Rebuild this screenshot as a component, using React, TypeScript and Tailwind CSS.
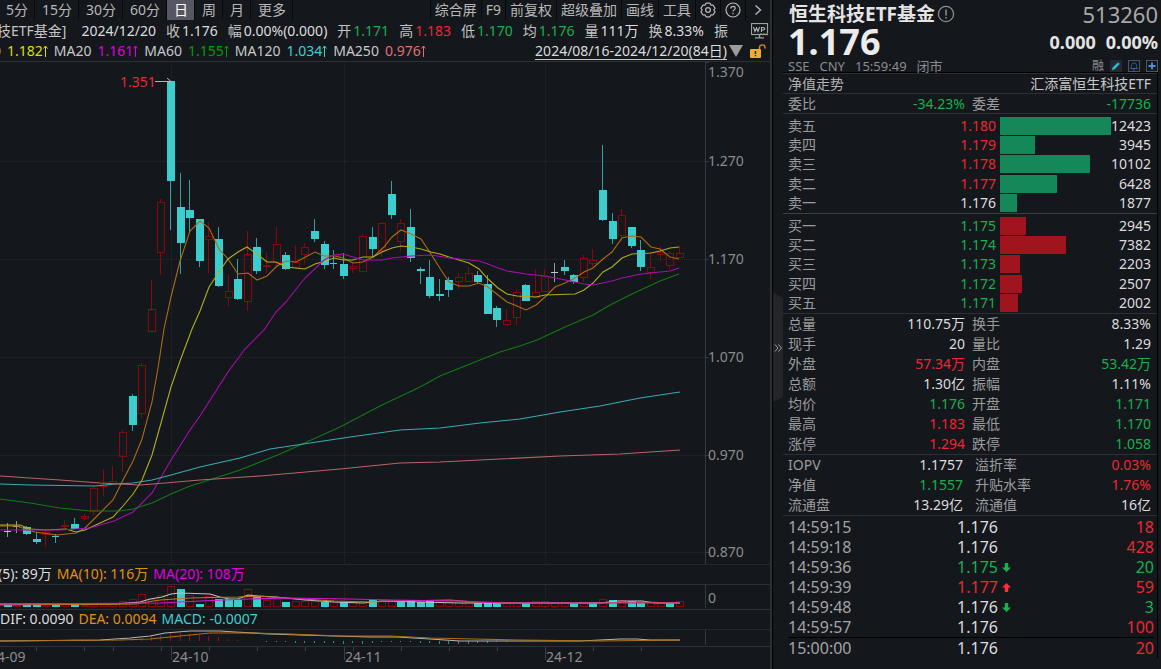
import type { ReactNode } from 'react';

type Tone = 'w' | 'r' | 'g' | 'l';
const tones: Record<Tone, string> = {
  w: 'text-[#dcdcdc]',
  r: 'text-[#ee2830]',
  g: 'text-[#1ab04c]',
  l: 'text-[#9c9c9c]',
};

// kind, high, body top, body bottom, low; r = rising, c = falling, w = unchanged
type Candle = ['r' | 'c' | 'w', number, number, number, number];
const FIRST = -17;
const candles: Candle[] = [
  ['w', 523, 531, 531, 537], ['w', 521, 526, 526, 533], ['c', 526, 527, 534, 535], ['c', 532, 539, 542, 544],
  ['r', 530, 532, 534, 547], ['c', 534, 536, 536, 543], ['r', 520, 525, 526, 528], ['c', 518, 524, 529, 529],
  ['r', 514, 516, 518, 520], ['r', 485, 488, 510, 516], ['r', 469, 485, 486, 496], ['r', 466, 481, 484, 484],
  ['r', 430, 432, 456, 472], ['c', 394, 396, 425, 431], ['r', 363, 365, 413, 418], ['r', 280, 309, 331, 331],
  ['r', 199, 202, 252, 275], ['c', 81, 81, 181, 230], ['c', 173, 207, 243, 274], ['c', 180, 210, 218, 232],
  ['c', 219, 219, 261, 267], ['r', 222, 236, 239, 273], ['c', 227, 239, 286, 287], ['r', 275, 291, 297, 306],
  ['c', 259, 279, 299, 300], ['r', 231, 254, 301, 311], ['c', 238, 247, 271, 274], ['r', 252, 265, 266, 273],
  ['r', 227, 244, 262, 267], ['c', 252, 255, 269, 270], ['r', 245, 262, 267, 268], ['r', 243, 247, 254, 263],
  ['c', 219, 231, 239, 242], ['c', 241, 244, 265, 269], ['c', 250, 263, 263, 269], ['c', 253, 264, 276, 279],
  ['r', 263, 266, 268, 273], ['r', 234, 236, 271, 271], ['c', 227, 237, 249, 258], ['r', 222, 223, 250, 257],
  ['c', 181, 194, 215, 219], ['r', 219, 223, 241, 251], ['c', 209, 227, 258, 262], ['c', 267, 269, 271, 284],
  ['c', 260, 277, 296, 298], ['c', 279, 294, 296, 301], ['c', 277, 280, 290, 297], ['r', 273, 277, 281, 289],
  ['r', 267, 273, 281, 282], ['c', 271, 275, 282, 284], ['c', 275, 284, 314, 314], ['c', 306, 308, 320, 327],
  ['r', 309, 320, 324, 325], ['r', 290, 292, 317, 325], ['c', 284, 285, 301, 301], ['r', 269, 292, 297, 298],
  ['r', 269, 276, 291, 291], ['w', 263, 272, 272, 282], ['c', 260, 267, 271, 275], ['c', 274, 275, 282, 284],
  ['r', 255, 258, 277, 282], ['r', 249, 260, 263, 267], ['c', 145, 190, 220, 221], ['c', 213, 221, 239, 244],
  ['r', 209, 215, 235, 241], ['c', 227, 227, 246, 248], ['c', 240, 250, 267, 271], ['r', 251, 267, 272, 279],
  ['r', 246, 252, 254, 261], ['r', 252, 253, 265, 269], ['r', 246, 253, 257, 258],
];

const volumes: [('r' | 'c'), number][] = [
  ['c', 2], ['r', 2], ['c', 2], ['c', 2], ['r', 2], ['c', 2], ['r', 2], ['c', 2], ['r', 1], ['r', 2], ['r', 2], ['r', 3],
  ['r', 5], ['r', 7], ['r', 12], ['r', 7], ['r', 11], ['r', 20], ['c', 18], ['r', 11], ['c', 3], ['r', 10], ['c', 8],
  ['c', 8], ['c', 7], ['r', 17], ['c', 10], ['r', 6], ['r', 7], ['c', 5], ['r', 5], ['r', 5], ['r', 5], ['c', 5],
  ['r', 5], ['c', 5], ['r', 4], ['r', 5], ['c', 7], ['r', 5], ['r', 5], ['c', 6], ['c', 7], ['c', 5], ['c', 6],
  ['r', 5], ['r', 5], ['r', 5], ['r', 4], ['c', 4], ['c', 4], ['c', 4], ['r', 3], ['r', 3], ['c', 4], ['r', 5],
  ['r', 5], ['r', 4], ['r', 4], ['c', 4], ['r', 4], ['c', 5], ['r', 7], ['c', 7], ['r', 6], ['c', 6], ['c', 4],
  ['r', 4], ['r', 3], ['c', 4], ['r', 5],
];

const macdBars: [number, number][] = [
  [-7, -1], [-6, -1], [-5, -2], [-4, -2], [-3, -3], [-2, -5], [-1, -6], [0, -8], [1, -8], [2, -7], [3, -6], [4, -5],
  [5, -4], [6, -2], [7, -1], [10, 1], [11, 1], [12, 1], [13, 2], [14, 2], [15, 2], [16, 2], [17, 2], [18, 3], [19, 2],
  [20, 3], [21, 2], [22, 1], [23, 1], [24, 1], [25, 1], [26, 2], [27, 2], [28, 3], [29, 3], [30, 3], [31, 3], [32, 2],
  [33, 2], [34, 1], [35, 1],
];

const averages = [
  { c: '#ad6c12', p: '0,526 17,526 25,529 35,532 57,535 76,533 85,528 100,513 113,500 122,482 133,461 142,439 152,402 158,368 164,329 171,297 180,261 190,231 200,221 209,228 219,249 228,259 238,274 248,273 257,280 267,276 277,266 286,261 296,262 315,252 324,256 335,256 343,258 353,263 363,262 373,257 384,247 392,237 401,230 411,234 421,239 431,254 441,270 449,282 459,286 469,286 479,283 488,287 498,295 507,302 517,306 526,310 536,305 545,297 555,287 565,283 575,278 584,272 593,268 603,259 612,252 622,238 631,236 641,237 651,247 660,249 670,257 679,259' },
  { c: '#b0ae1c', p: '0,525 20,525 30,529 45,530 66,529 76,532 85,530 113,517 123,506 133,494 142,480 152,455 161,423 171,387 180,361 192,329 200,311 209,287 219,272 228,259 238,252 247,247 257,254 267,262 276,262 286,267 305,269 315,264 325,261 334,258 343,260 353,260 363,257 373,257 382,252 392,248 401,246 411,247 421,249 431,252 440,254 449,257 459,260 469,263 479,269 488,279 498,288 507,294 517,296 536,297 545,295 575,294 584,290 593,283 603,272 612,267 622,258 632,254 651,253 660,251 670,248 679,247' },
  { c: '#a80fae', p: '0,530 60,530 90,528 114,521 133,512 152,493 171,460 190,430 200,416 228,372 245,349 264,330 276,312 286,302 305,278 324,260 334,255 343,254 353,257 363,260 382,260 392,258 411,256 431,255 450,258 469,260 479,261 488,264 498,268 507,271 526,274 545,276 555,278 570,281 584,284 593,285 612,281 622,278 641,274 660,272 670,271 679,268' },
  { c: '#127a14', p: '0,499 30,503 60,508 90,511 120,511 133,509 152,503 171,494 190,486 200,483 240,470 280,454 300,445 340,427 380,406 420,387 440,376 470,364 500,352 520,346 537,340 565,327 593,315 612,304 632,294 660,281 679,274' },
  { c: '#36adad', p: '0,484 30,485 95,486 115,484 133,483 152,480 171,475 200,467 240,458 270,449 310,443 350,437 400,430 440,428 480,423 520,419 560,412 600,406 640,398 680,392' },
  { c: '#bb6464', p: '0,476 60,480 100,483 140,485 165,483 200,480 260,476 340,469 400,463 440,462 500,459 560,456 620,454 680,450' },
];

const candleX = (n: number) => Math.round(170 + 9.6 * n);
const months = [171, 344, 545];

function PriceChart() {
  return (
    <svg viewBox="0 62 770 502" className="block h-auto w-full" role="img" aria-label="日K线">
      <g stroke="#25282d" strokeDasharray="1 1">
        {[161, 259, 357, 455, 552].map((y) => <line key={y} x1="0" x2="705" y1={y + 0.5} y2={y + 0.5} />)}
        {months.map((x) => <line key={x} x1={x + 0.5} x2={x + 0.5} y1="62" y2="564" />)}
      </g>
      <line x1="705.5" x2="705.5" y1="62" y2="564" stroke="#35383d" />
      {[62, 161, 259, 357, 455, 552].map((y) => <line key={y} x1="705" x2="709" y1={y + 0.5} y2={y + 0.5} stroke="#35383d" />)}
      {candles.map(([kind, high, top, bottom, low], n) => {
        const x = candleX(n + FIRST);
        if (kind === 'r') {
          return (
            <g key={n} stroke="#8a0808" fill="none">
              <path d={`M${x + 0.5} ${high}V${top}M${x + 0.5} ${bottom}V${low}`} />
              <rect x={x - 3 + 0.5} y={top + 0.5} width="7" height={Math.max(bottom - top, 1)} />
            </g>
          );
        }
        const fill = kind === 'c' ? '#3ccece' : '#c4c4c4';
        const flat = bottom === top;
        return (
          <g key={n} fill={fill}>
            <rect x={x} y={high} width="1" height={low - high} opacity="0.75" />
            <rect x={x - 3} y={top} width={flat ? 7 : 8} height={Math.max(bottom - top, 1)} />
          </g>
        );
      })}
      {averages.map((m) => <polyline key={m.c} points={m.p} fill="none" stroke={m.c} strokeWidth="1.1" />)}
      <path d="M155 81.5H171M167 78L171 81.5L168 83" fill="none" stroke="#b4b4b4" />
      <text x="120" y="87" className="fill-[#ee2830] text-sm">1.351</text>
      {[['1.370', 77], ['1.270', 166], ['1.170', 264], ['1.070', 362], ['0.970', 460], ['0.870', 557]].map(([t, y]) => (
        <text key={t} x="708" y={y} className="fill-[#8c8c8c] text-sm">{t}</text>
      ))}
    </svg>
  );
}

function VolumeChart() {
  return (
    <svg viewBox="0 585 770 24" className="block h-auto w-full" role="img" aria-label="成交量">
      {months.map((x) => <line key={x} x1={x + 0.5} x2={x + 0.5} y1="585" y2="609" stroke="#25282d" strokeDasharray="1 1" />)}
      <line x1="705.5" x2="705.5" y1="585" y2="608" stroke="#35383d" />
      {volumes.map(([kind, h], n) => {
        const x = candleX(n + FIRST);
        return kind === 'r'
          ? <rect key={n} x={x - 2.5} y={606.5 - h} width="7" height={h} fill="none" stroke="#8a0808" />
          : <rect key={n} x={x - 3} y={607 - h} width="8" height={h} fill="#3ccece" />;
      })}
      <g fill="none" strokeWidth="1.2">
        <polyline stroke="#c0c0c0" points="0,604 115,604 140,602 150,599 162,597 171,594 180,593 210,594 220,597 229,599 238,599 248,595 258,596 276,597 305,600 334,602 363,603 382,601 420,602 460,603 600,603 617,601 642,601 655,603 680,603" />
        <polyline stroke="#c07a14" points="0,605 135,604 160,600 190,598 238,597 258,596 285,598 334,601 370,602 395,601 450,600 475,602 520,603 600,603 640,602 680,603" />
        <polyline stroke="#d018d0" points="0,604 160,603 200,601 248,599 285,598 350,599 390,600 460,601 500,603 680,603" />
      </g>
      <text x="708" y="603" className="fill-[#8c8c8c] text-sm">0</text>
    </svg>
  );
}

function MacdChart() {
  return (
    <svg viewBox="0 630 770 16" className="block h-auto w-full" role="img" aria-label="MACD">
      <line x1="705.5" x2="705.5" y1="630" y2="645" stroke="#35383d" />
      {macdBars.map(([n, v]) => (
        <rect key={n} x={candleX(n)} y={v < 0 ? 641 + v : 641} width="1" height={Math.abs(v)} fill={v < 0 ? '#a00c0c' : '#2a9090'} />
      ))}
      <g fill="none" strokeWidth="1.2">
        <polyline stroke="#b4b4b4" points="0,641 100,640 130,638 150,636 165,633 190,631 220,631 235,632 270,634 300,635 370,637 398,637 430,639 460,641 500,641 580,641 620,639 637,639 650,640 680,640" />
        <polyline stroke="#b06f10" points="0,641 120,640 150,639 170,637 190,635 210,633 250,633 290,634 340,636 390,636 430,638 475,639 520,640 600,641 680,640" />
      </g>
    </svg>
  );
}

function TimeAxis() {
  return (
    <svg viewBox="0 647 770 22" className="block h-auto w-full" role="img" aria-label="时间轴">
      <g stroke="#3a3d42">
        {[36, 84, 113, 161, 209, 257, 305, 353, 401, 449, 497, 593, 641].map((x) => <line key={x} x1={x + 0.5} x2={x + 0.5} y1="647" y2="651" />)}
        {months.map((x) => <line key={x} x1={x + 0.5} x2={x + 0.5} y1="647" y2="660" />)}
      </g>
      {([['24-09', -11], ['24-10', 172], ['24-11', 345], ['24-12', 546]] as [string, number][]).map(([t, x]) => (
        <text key={t} x={x} y="662" className="fill-[#8c8c8c] text-sm">{t}</text>
      ))}
    </svg>
  );
}

function Tab({ children, active }: { children: ReactNode; active?: boolean }) {
  return (
    <button type="button" className={`h-5 border-r border-[#08090b] px-[6px] pb-px pl-[7px] ${active ? 'bg-[#565763] text-white' : 'text-[#b8b8b8]'}`}>
      {children}
    </button>
  );
}

function Tool({ children, label }: { children: ReactNode; label?: string }) {
  return (
    <button type="button" aria-label={label} className="flex h-5 items-center border-l border-[#08090b] px-1 pb-px text-[#b8b8b8]">
      {children}
    </button>
  );
}

function Quote({ label, value, tone = 'w' }: { label: string; value?: string; tone?: Tone }) {
  return (
    <span className="flex gap-[2px]">
      <span className="text-[#c4c4c4]">{label}</span>
      {value && <span className={tones[tone]}>{value}</span>}
    </span>
  );
}

function UpArrow() {
  return (
    <svg viewBox="0 0 5 12" className="h-3 w-[5px]" fill="none" stroke="currentColor" aria-hidden="true">
      <path d="M2.5 12V1M0.5 3.5L2.5 1L4.5 3.5" />
    </svg>
  );
}

function Average({ value, className }: { value: string; className: string }) {
  return <span className={`flex items-center ${className}`}>{value}<UpArrow /></span>;
}

type Level = [string, string, Tone, number];
const asks: Level[] = [
  ['卖五', '1.180', 'r', 12423], ['卖四', '1.179', 'r', 3945], ['卖三', '1.178', 'r', 10102], ['卖二', '1.177', 'r', 6428], ['卖一', '1.176', 'w', 1877],
];
const bids: Level[] = [
  ['买一', '1.175', 'g', 2945], ['买二', '1.174', 'g', 7382], ['买三', '1.173', 'g', 2203], ['买四', '1.172', 'g', 2507], ['买五', '1.171', 'g', 2002],
];

function Book({ levels, bar }: { levels: Level[]; bar: string }) {
  return (
    <table className="h-[97px] w-full table-fixed border-collapse text-sm leading-[18px]">
      <tbody>
        {levels.map(([name, price, tone, size]) => (
          <tr key={name}>
            <th scope="row" className="w-[72px] p-0 text-left font-normal text-[#9c9c9c]">{name}</th>
            <td className={`p-0 pr-1 text-right ${tones[tone]}`}>{price}</td>
            <td className="w-[151px] p-0">
              <div className="flex h-[18px] items-center justify-between">
                <div className="w-[111px] shrink-0">
                  <div className={`h-[18px] ${bar}`} style={{ width: `${(size / 12423) * 100}%` }} />
                </div>
                <span className={tones.w}>{size}</span>
              </div>
            </td>
          </tr>
        ))}
      </tbody>
    </table>
  );
}

type Stat = [string, string, Tone, string, string, Tone];
const stats: Stat[] = [
  ['总量', '110.75万', 'w', '换手', '8.33%', 'w'],
  ['现手', '20', 'w', '量比', '1.29', 'w'],
  ['外盘', '57.34万', 'r', '内盘', '53.42万', 'g'],
  ['总额', '1.30亿', 'w', '振幅', '1.11%', 'w'],
  ['均价', '1.176', 'g', '开盘', '1.171', 'g'],
  ['最高', '1.183', 'r', '最低', '1.170', 'g'],
  ['涨停', '1.294', 'r', '跌停', '1.058', 'g'],
];
const fundStats: Stat[] = [
  ['IOPV', '1.1757', 'w', '溢折率', '0.03%', 'r'],
  ['净值', '1.1557', 'g', '升贴水率', '1.76%', 'r'],
  ['流通盘', '13.29亿', 'w', '流通值', '16亿', 'w'],
];

function Stats({ rows, inset }: { rows: Stat[]; inset?: boolean }) {
  return (
    <table className="w-full table-fixed border-collapse text-sm leading-5">
      <tbody>
        {rows.map(([a, av, at, b, bv, bt]) => (
          <tr key={a}>
            <th scope="row" className="w-[72px] p-0 text-left font-normal text-[#9c9c9c]">{a}</th>
            <td className={`w-[105px] p-0 text-right ${inset ? 'pr-[2px]' : ''} ${tones[at]}`}>{av}</td>
            <th scope="row" className={`p-0 text-left font-normal text-[#9c9c9c] ${inset ? 'pl-[10px]' : 'pl-[7px]'}`}>{b}</th>
            <td className={`w-[80px] p-0 text-right ${tones[bt]}`}>{bv}</td>
          </tr>
        ))}
      </tbody>
    </table>
  );
}

type Trade = [string, string, Tone, '' | 'up' | 'down', string, Tone];
const trades: Trade[] = [
  ['14:59:15', '1.176', 'w', '', '18', 'r'],
  ['14:59:18', '1.176', 'w', '', '428', 'r'],
  ['14:59:36', '1.175', 'g', 'down', '20', 'g'],
  ['14:59:39', '1.177', 'r', 'up', '59', 'r'],
  ['14:59:48', '1.176', 'w', 'down', '3', 'g'],
  ['14:59:57', '1.176', 'w', '', '100', 'r'],
  ['15:00:00', '1.176', 'w', '', '20', 'r'],
];

function TradeArrow({ dir }: { dir: 'up' | 'down' }) {
  return (
    <svg viewBox="0 0 9 9" className={`h-[9px] w-[9px] ${dir === 'up' ? 'fill-[#ff2d35]' : 'rotate-180 fill-[#1ab04c]'}`} aria-hidden="true">
      <path d="M4.5 0L9 4.6H6.2V9H2.8V4.6H0Z" />
    </svg>
  );
}

function Trades() {
  return (
    <table className="w-full table-fixed border-collapse text-base leading-5">
      <tbody>
        {trades.map(([time, price, pt, dir, size, st], n) => (
          <tr key={time} className={n === trades.length - 1 ? 'border-t border-black' : ''}>
            <td className="w-[110px] p-0 text-[#a4a4a4]">{time}</td>
            <td className={`w-[100px] p-0 text-right ${tones[pt]}`}>{price}</td>
            <td className="w-5 p-0 pl-1">{dir && <TradeArrow dir={dir} />}</td>
            <td className={`p-0 text-right ${tones[st]}`}>{size}</td>
          </tr>
        ))}
      </tbody>
    </table>
  );
}

export default function App() {
  return (
    <div className="flex min-h-screen bg-[#14171c] font-['Noto_Sans','Noto_Sans_CJK_SC',sans-serif] text-sm text-[#dcdcdc]">
      <main className="min-w-0 flex-1 overflow-hidden">
        <nav className="flex h-5 justify-between whitespace-nowrap leading-[18px]">
          <div className="-ml-px flex">
            <Tab>5分</Tab>
            <Tab>15分</Tab>
            <Tab>30分</Tab>
            <Tab>60分</Tab>
            <Tab active>日</Tab>
            <Tab>周</Tab>
            <Tab>月</Tab>
            <Tab>更多</Tab>
          </div>
          <div className="flex">
            <Tool>综合屏</Tool>
            <Tool>F9</Tool>
            <Tool>前复权</Tool>
            <Tool>超级叠加</Tool>
            <Tool>画线</Tool>
            <Tool>工具</Tool>
            <Tool label="设置">
              <svg viewBox="0 0 16 16" className="h-4 w-4" fill="none" stroke="currentColor" strokeWidth="1.2">
                <path d="M6 1.2H10L11 3.2L13.2 3.2L15 6.4L13.8 8L15 9.6L13.2 12.8H11L10 14.8H6L5 12.8H2.8L1 9.6L2.2 8L1 6.4L2.8 3.2H5Z" strokeLinejoin="round" />
                <circle cx="8" cy="8" r="2.4" />
              </svg>
            </Tool>
            <Tool label="帮助">
              <svg viewBox="0 0 16 16" className="h-4 w-4" fill="none" stroke="currentColor" strokeWidth="1.2">
                <circle cx="8" cy="8" r="7" />
                <path d="M5.8 6.4C5.8 3.6 10.2 3.6 10.2 6.3C10.2 7.9 8 7.9 8 9.6M8 10.8V12.2" />
              </svg>
            </Tool>
            <Tool label="展开">
              <svg viewBox="0 0 16 16" className="h-4 w-4" fill="none" stroke="currentColor" strokeWidth="1.4">
                <path d="M5.5 3.5L10.5 8L5.5 12.5" />
              </svg>
            </Tool>
          </div>
        </nav>

        <div className="flex h-[21px] items-center justify-between whitespace-nowrap leading-5">
          <div className="-ml-[3px] flex gap-[10px]">
            <span className="pr-[5px] text-[#c4c4c4]">技ETF基金]</span>
            <span>2024/12/20</span>
            <Quote label="收" value="1.176" />
            <Quote label="幅" value="0.00%(0.000)" />
            <Quote label="开" value="1.171" tone="g" />
            <Quote label="高" value="1.183" tone="r" />
            <Quote label="低" value="1.170" tone="g" />
            <Quote label="均" value="1.176" tone="g" />
            <Quote label="量" value="111万" />
            <Quote label="换" value="8.33%" />
            <Quote label="振" />
          </div>
          <button type="button" aria-label="WP" className="mr-px">
            <svg viewBox="0 0 18 16" className="h-4 w-[18px]" fill="none" stroke="#a0a0a0">
              <rect x="0.5" y="0.5" width="16" height="11" strokeWidth="1.2" />
              <path d="M8.5 12V14.5M4 14.8H13" strokeWidth="1.3" />
              <path d="M2.5 4L4 8.5L5.5 5L7 8.5L8.5 4M10.5 9V4.5H12.2C14.2 4.5 14.2 7 12.2 7H10.5" stroke="#b8b8b8" strokeWidth="1.1" />
              <path d="M9 10.5H18" stroke="#e6262e" strokeDasharray="2 1" />
            </svg>
          </button>
        </div>

        <div className="flex h-5 items-center justify-between whitespace-nowrap leading-5">
          <div className="-ml-[7px] flex gap-[6px] text-[#c8c8c8]">
            <span>0</span>
            <Average value="1.182" className="text-[#dede00]" />
            <span>MA20</span>
            <Average value="1.161" className="text-[#e000e0]" />
            <span>MA60</span>
            <Average value="1.155" className="text-[#00a000]" />
            <span>MA120</span>
            <Average value="1.034" className="text-[#3cd0d0]" />
            <span>MA250</span>
            <Average value="0.976" className="text-[#e07070]" />
          </div>
          <div className="flex items-center gap-[2px] pr-1">
            <button type="button" className="flex items-center gap-[2px]">
              <span className="border-b border-[#c8c8c8] leading-[17px]">2024/08/16-2024/12/20(84日)</span>
              <svg viewBox="0 0 14 12" className="h-3 w-[14px] fill-[#9c9c9c]" aria-hidden="true"><path d="M0 0H14L7 12Z" /></svg>
            </button>
            <button type="button" aria-label="解锁" className="ml-[5px]">
              <svg viewBox="0 0 16 14" className="h-[14px] w-4">
                <rect x="0" y="5" width="11" height="9" rx="1" fill="#e8ae38" />
                <path d="M9.5 5V3.5C9.5 0 15 0 15 3.5V4.5" fill="none" stroke="#c8922a" strokeWidth="1.4" />
                <path d="M5.5 7V10M5.5 11V12.2" stroke="#2a2418" strokeWidth="1.5" />
              </svg>
            </button>
          </div>
        </div>

        <section className="border-t border-[#2c2f34]"><PriceChart /></section>

        <section className="border-t border-[#25282d]">
          <div className="flex h-[19px] items-center gap-[5px] whitespace-nowrap pb-px leading-[18px]">
            <span className="-ml-[2px]">(5): 89万</span>
            <span className="text-[#e09010]">MA(10): 116万</span>
            <span className="text-[#e000e0]">MA(20): 108万</span>
          </div>
          <div className="border-t border-[#2c2f34]"><VolumeChart /></div>
        </section>

        <section className="border-t border-[#2c2f34]">
          <div className="flex h-[19px] items-center gap-[5px] whitespace-nowrap pb-px leading-[18px]">
            <span>DIF: 0.0090</span>
            <span className="text-[#e09010]">DEA: 0.0094</span>
            <span className="text-[#3cd0d0]">MACD: -0.0007</span>
          </div>
          <div className="border-t border-[#25282d]"><MacdChart /></div>
        </section>
        <div className="border-t border-[#2c2f34]"><TimeAxis /></div>
      </main>

      <aside className="flex w-[391px] shrink-0 border-l-2 border-[#2e2f35]">
        <div className="flex w-[11px] flex-col border-l border-black pt-[293px]">
          <button type="button" aria-label="收起" className="flex h-[109px] w-[10px] items-center justify-center bg-[#24252b] text-[#9c9c9c] [clip-path:polygon(0_0,100%_5px,100%_104px,0_100%)]">
            <svg viewBox="0 0 8 8" className="h-2 w-2" fill="none" stroke="currentColor" aria-hidden="true"><path d="M1 0.5L4 4L1 7.5M4.5 0.5L7.5 4L4.5 7.5" /></svg>
          </button>
        </div>
        <div className="min-w-0 flex-1">
          <header className="h-[72px] pl-[5px] pr-[3px]">
            <div className="flex h-7 items-center justify-between">
              <h1 className="flex items-center gap-[2px] pl-px text-[19px] font-bold leading-7 text-[#e4e4e4]">
                恒生科技ETF基金
                <svg viewBox="0 0 18 18" className="h-[18px] w-[18px]" fill="none" stroke="#8c8c8c" strokeWidth="1.3" aria-hidden="true">
                  <circle cx="9" cy="9" r="7.6" /><path d="M9 4.5V10.5M9 12V13.6" strokeWidth="1.6" />
                </svg>
              </h1>
              <span className="text-[22px] leading-7 text-[#a8a8a8]">513260</span>
            </div>
            <div className="flex h-7 items-center justify-between font-bold">
              <span className="text-[36px] leading-7 text-[#ececec]">1.176</span>
              <span className="flex gap-[10px] text-lg leading-6 text-[#e4e4e4]"><span>0.000</span><span>0.00%</span></span>
            </div>
            <div className="flex h-4 items-center justify-between pt-[3px] text-[13px] leading-4 text-[#8c8c8c]">
              <span className="flex gap-[10px]"><span>SSE</span><span>CNY</span><span>15:59:49</span><span>闭市</span></span>
              <span className="flex items-center gap-[6px]">
                <span className="text-xs leading-4">融</span>
                <svg viewBox="0 0 12 12" className="h-3 w-3" aria-hidden="true"><rect width="12" height="12" fill="#25282e" /><path d="M2 10L2.6 7.6L8 2.2L9.8 4L4.4 9.4Z" fill="#2cb8d8" /></svg>
                <svg viewBox="0 0 12 12" className="h-3 w-3" fill="none" aria-hidden="true"><rect x="0.5" y="0.5" width="11" height="11" stroke="#50545c" /><path d="M2.5 8.5C3.5 7.8 3.5 7 3.5 5.5C3.5 2 8.5 2 8.5 5.5C8.5 7 8.5 7.8 9.5 8.5ZM5 10H7" stroke="#2a62a8" /></svg>
                <svg viewBox="0 0 12 12" className="h-3 w-3" fill="none" aria-hidden="true"><rect x="0.5" y="0.5" width="11" height="11" stroke="#50545c" /><path d="M6 2.5V9.5M2.5 6H9.5" stroke="#4a90e8" strokeWidth="1.8" /></svg>
              </span>
            </div>
          </header>

          <div className="mr-[3px] border-r border-t border-black">
            <div className="flex h-[21px] items-center justify-between border-b border-t border-[#2c2f34] pl-[5px] pr-[6px] leading-[18px]">
              <span className="text-[#b0b0b0]">净值走势</span>
              <span className="text-[#c8c8c8]">汇添富恒生科技ETF</span>
            </div>
            <div className="border-b border-[#2c2f34] pl-[5px] pr-[6px] [&_table]:leading-[19px]">
              <Stats rows={[['委比', '-34.23%', 'g', '委差', '-17736', 'g']]} />
            </div>
            <div className="border-b border-[#3c3f44] pl-[5px] pr-[6px] pt-[2px]"><Book levels={asks} bar="bg-[#15885a]" /></div>
            <div className="border-b border-[#2c2f34] pl-[5px] pr-[6px] pt-[2px]"><Book levels={bids} bar="bg-[#a0151d]" /></div>
            <div className="border-b border-[#2c2f34] pl-[5px] pr-[6px]"><Stats rows={stats} /></div>
            <div className="border-b border-[#2c2f34] pl-[5px] pr-[6px]"><Stats rows={fundStats} inset /></div>
            <div className="pl-[5px] pr-[3px] pt-px"><Trades /></div>
          </div>
        </div>
      </aside>
    </div>
  );
}
